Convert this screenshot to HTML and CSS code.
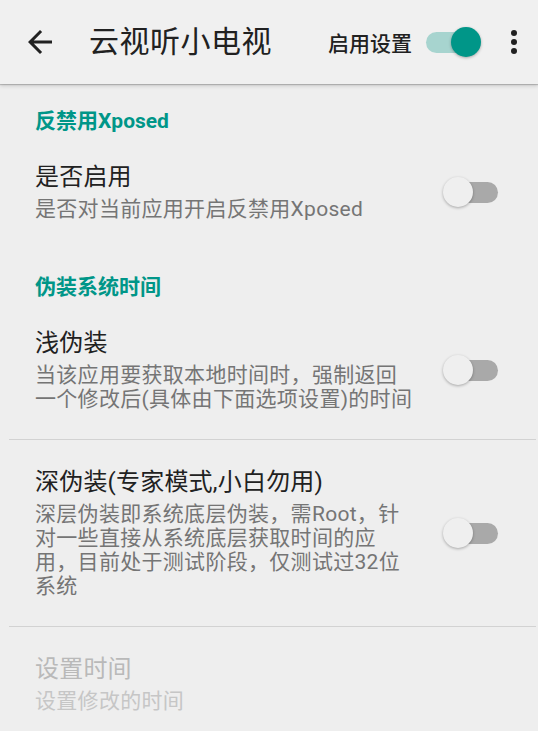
FILE: index.html
```html
<!DOCTYPE html>
<html lang="zh-CN">
  <head>
    <meta charset="UTF-8" />
    <meta name="viewport" content="width=device-width, initial-scale=1.0" />
    <link rel="stylesheet" href="styles.css">
  </head>
  <body>
    <div class="toolbar">
      <svg class="nav-icon" viewBox="0 0 24 24">
        <path d="M20 11H7.83l5.59-5.59L12 4l-8 8 8 8 1.41-1.41L7.83 13H20v-2z" fill="#212121" />
      </svg>
      <div class="app-title">云视听小电视</div>
      <span class="enable-label">启用设置</span>
      <div class="switch on">
        <div class="track"></div>
        <div class="thumb"></div>
      </div>
      <svg class="menu-icon" viewBox="0 0 24 24">
        <circle cx="12" cy="6" r="2" fill="#212121" />
        <circle cx="12" cy="12" r="2" fill="#212121" />
        <circle cx="12" cy="18" r="2" fill="#212121" />
      </svg>
    </div>

    <div class="prefs">
      <div class="category">反禁用Xposed</div>
      <div class="pref">
        <div class="pref-text">
          <div class="pref-title">是否启用</div>
          <div class="pref-summary">是否对当前应用开启反禁用Xposed</div>
        </div>
        <div class="switch">
          <div class="track"></div>
          <div class="thumb"></div>
        </div>
      </div>

      <div class="category">伪装系统时间</div>
      <div class="pref">
        <div class="pref-text">
          <div class="pref-title">浅伪装</div>
          <div class="pref-summary">当该应用要获取本地时间时，强制返回一个修改后(具体由下面选项设置)的时间</div>
        </div>
        <div class="switch">
          <div class="track"></div>
          <div class="thumb"></div>
        </div>
      </div>
      <div class="divider"></div>
      <div class="pref">
        <div class="pref-text">
          <div class="pref-title">深伪装(专家模式,小白勿用)</div>
          <div class="pref-summary">深层伪装即系统底层伪装，需Root，针对一些直接从系统底层获取时间的应用，目前处于测试阶段，仅测试过32位系统</div>
        </div>
        <div class="switch">
          <div class="track"></div>
          <div class="thumb"></div>
        </div>
      </div>
      <div class="divider"></div>
      <div class="pref disabled">
        <div class="pref-text">
          <div class="pref-title">设置时间</div>
          <div class="pref-summary">设置修改的时间</div>
        </div>
      </div>
    </div>
  </body>
</html>
```

FILE: styles.css
```css
* {
  box-sizing: border-box;
}

body {
  margin: 0;
  background: #eeeeee;
  font-family: Roboto, "Noto Sans CJK SC", sans-serif;
  color: #212121;
  overflow: hidden;
}

/* toolbar */
.toolbar {
  position: relative;
  z-index: 1;
  height: 84px;
  display: flex;
  align-items: center;
  background: #f0f0f0;
  padding: 0 6px 0 22px;
  box-shadow: 0 1px 1px rgba(0, 0, 0, 0.18), 0 2px 4px rgba(0, 0, 0, 0.14);
}

.nav-icon,
.menu-icon {
  width: 36px;
  height: 36px;
  flex: none;
}

.app-title {
  flex: 1;
  margin-left: 31px;
  font-size: 30px;
  line-height: 36px;
  letter-spacing: 0.5px;
}

.enable-label {
  font-size: 21px;
  font-weight: 500;
  margin-right: 10px;
}

.menu-icon {
  margin-left: 15px;
}

/* switch */
.switch {
  position: relative;
  flex: none;
  width: 59px;
  height: 30px;
}

.switch .track {
  position: absolute;
  left: 4px;
  right: 4px;
  top: 4.5px;
  height: 21px;
  border-radius: 10.5px;
  background: #a9a9a9;
}

.switch .thumb {
  position: absolute;
  left: 0;
  top: 0;
  width: 30px;
  height: 30px;
  border-radius: 50%;
  background: #efefef;
  box-shadow: 0 1px 3px rgba(0, 0, 0, 0.3);
}

.switch.on .track {
  background: #a7d4cf;
}

.switch.on .thumb {
  left: 29px;
  background: #009688;
}

/* preference list */
.category {
  padding: 26px 35px 1px;
  font-size: 21px;
  line-height: 25px;
  font-weight: 700;
  color: #009688;
}

.category:first-child {
  padding-top: 25px;
}

.pref {
  display: flex;
  align-items: center;
  padding: 28px 0 28px 35px;
}

.pref-text {
  width: 379px;
}

.pref-title {
  font-size: 24px;
  line-height: 28px;
  letter-spacing: 0.2px;
}

.pref-summary {
  margin-top: 6px;
  font-size: 21px;
  line-height: 24px;
  letter-spacing: 0.3px;
  color: #757575;
}

.pref .switch {
  margin-left: auto;
  margin-right: 36px;
}

.pref.disabled .pref-title {
  color: #b9b9b9;
}

.pref.disabled .pref-summary {
  color: #c6c6c6;
}

.divider {
  height: 1px;
  margin: 0 2px 0 9px;
  background: #d2d2d2;
}
```
